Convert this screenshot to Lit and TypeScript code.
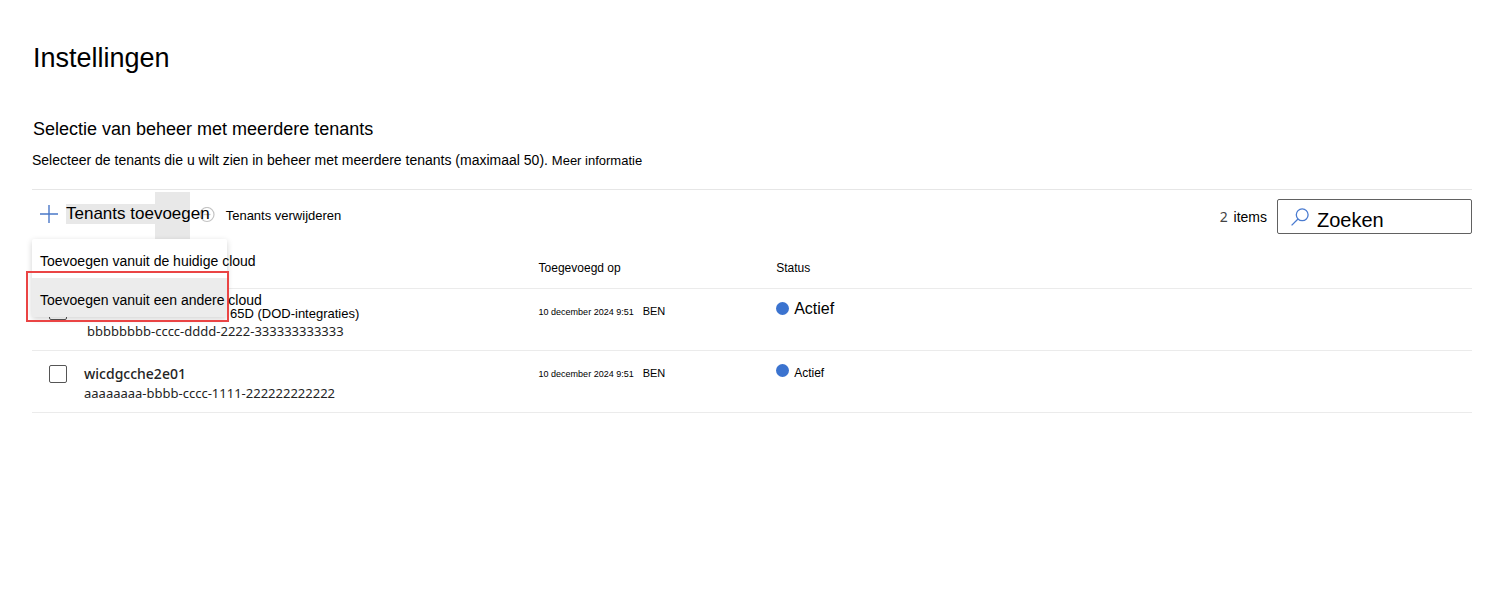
import { LitElement, html, css } from "lit";
import { customElement, property } from "lit/decorators.js";
import { classMap } from "lit/directives/class-map.js";

interface Tenant {
  name: string;
  id: string;
  added: string;
  by: string;
  status: string;
  underMenu: boolean;
}

const tenants: Tenant[] = [
  {
    name: "65D (DOD-integraties)",
    id: "bbbbbbbb-cccc-dddd-2222-333333333333",
    added: "10 december 2024 9:51",
    by: "BEN",
    status: "Actief",
    underMenu: true,
  },
  {
    name: "wicdgcche2e01",
    id: "aaaaaaaa-bbbb-cccc-1111-222222222222",
    added: "10 december 2024 9:51",
    by: "BEN",
    status: "Actief",
    underMenu: false,
  },
];

@customElement("tenant-toolbar")
class TenantToolbar extends LitElement {
  @property({ type: Number }) count = 0;

  static styles = css`
    :host {
      display: flex;
      justify-content: space-between;
      align-items: flex-start;
      height: 50px;
      border-top: 1px solid #e6e6e6;
    }
    button {
      border: 0;
      background: none;
      padding: 0;
      margin: 0;
      font: inherit;
      color: inherit;
      text-align: left;
      white-space: nowrap;
    }
    .commands {
      display: flex;
      position: relative;
      z-index: 1;
    }
    .add {
      display: flex;
      align-items: center;
      gap: 8px;
      height: 50px;
      padding: 0 0 2px 8px;
      position: relative;
      z-index: 1;
      font-size: 17px;
      line-height: 20px;
      background: linear-gradient(#e8e8e8, #e8e8e8) 123px 2px / 35px 47px no-repeat;
    }
    .add-label {
      background: linear-gradient(#e8e8e8, #e8e8e8) 0 0 / 89px 20px no-repeat;
    }
    .remove {
      display: flex;
      align-items: center;
      gap: 11px;
      height: 50px;
      margin-left: -11px;
      font-size: 13px;
      line-height: 20px;
    }
    .remove-label {
      padding-top: 2px;
    }
    .menu {
      position: absolute;
      top: 49px;
      left: 0;
      width: 195px;
      z-index: 2;
      background: #fff;
      border-radius: 2px;
      box-shadow: 0 2px 6px rgba(0, 0, 0, 0.18);
    }
    .item {
      display: block;
      position: relative;
      isolation: isolate;
      width: 100%;
      padding: 6px 0 0 8px;
      font-size: 14px;
      line-height: 33px;
    }
    .item.active {
      background: #ececec;
    }
    .item.active::before {
      content: "";
      position: absolute;
      z-index: -1;
      inset: -7px -2px -5px -6px;
      border: 2px solid #ea4444;
    }
    .right {
      display: flex;
      align-items: center;
      gap: 10px;
      padding-top: 9px;
    }
    .count {
      font-size: 14px;
      line-height: 20px;
    }
    .number {
      font-family: "Noto Sans", sans-serif;
      color: #444;
      margin-right: 2px;
    }
    .search {
      display: flex;
      align-items: center;
      gap: 8px;
      box-sizing: border-box;
      width: 195px;
      height: 35px;
      padding-left: 13px;
      border: 1px solid #616161;
      border-radius: 2px;
    }
    .search input {
      flex: 1;
      min-width: 0;
      height: 33px;
      box-sizing: border-box;
      border: 0;
      outline: 0;
      padding: 7px 0 0;
      background: none;
      font: 20px "Liberation Sans", Arial, sans-serif;
      color: #000;
    }
    .search input::placeholder {
      color: #000;
      opacity: 1;
    }
  `;

  render() {
    return html`
      <div class="commands">
        <button class="add" aria-haspopup="menu" aria-expanded="true">
          <svg width="18" height="18" viewBox="0 0 18 18" fill="none" stroke="#4a78c8" stroke-width="1.4">
            <path d="M9 0v18M0 9h18" />
          </svg>
          <span class="add-label">Tenants toevoegen</span>
        </button>
        <button class="remove">
          <svg width="16" height="16" viewBox="0 0 16 16" fill="none" stroke="#c4c4c4" stroke-width="1.2">
            <circle cx="8" cy="7.5" r="7" />
            <path d="M4.5 7.5h7" />
          </svg>
          <span class="remove-label">Tenants verwijderen</span>
        </button>
        <div class="menu" role="menu">
          <button class="item" role="menuitem">Toevoegen vanuit de huidige cloud</button>
          <button class="item active" role="menuitem">Toevoegen vanuit een andere cloud</button>
        </div>
      </div>
      <div class="right">
        <span class="count"><span class="number">${this.count}</span> items</span>
        <label class="search">
          <svg width="18" height="18" viewBox="0 0 18 18" fill="none" stroke="#4a7bd0" stroke-width="1.3">
            <circle cx="11.2" cy="6.8" r="5.9" />
            <path d="M7 11L.6 17.4" />
          </svg>
          <input type="search" placeholder="Zoeken" aria-label="Zoeken" />
        </label>
      </div>
    `;
  }
}

@customElement("tenant-table")
class TenantTable extends LitElement {
  @property({ attribute: false }) rows: Tenant[] = [];

  static styles = css`
    :host {
      display: block;
    }
    table {
      width: 100%;
      table-layout: fixed;
      border-spacing: 0;
    }
    .col-check {
      width: 52px;
    }
    .col-name {
      width: 31.5%;
    }
    .col-added {
      width: 16.5%;
    }
    th,
    td {
      padding: 0;
      text-align: left;
      vertical-align: top;
      border-bottom: 1px solid #ebebeb;
      white-space: nowrap;
    }
    th {
      height: 30px;
      padding: 18px 0 0 1px;
      font-size: 12px;
      line-height: 20px;
      font-weight: 400;
    }
    td {
      height: 61px;
    }
    .check {
      appearance: none;
      display: block;
      box-sizing: border-box;
      width: 18px;
      height: 18px;
      margin: 14px 0 0 17px;
      border: 1px solid #555;
      border-radius: 2px;
      background: #fff;
    }
    .tenant {
      padding-top: 13px;
      font-family: "Noto Sans", sans-serif;
      color: #242424;
    }
    .name {
      font-size: 14px;
      line-height: 20px;
      font-weight: 500;
    }
    .id {
      font-size: 13px;
      line-height: 18px;
    }
    .under .check {
      margin-top: 13px;
    }
    .under .tenant {
      padding: 17px 0 0 3px;
    }
    .under .name {
      padding-left: 143px;
      font: 13px/16px "Liberation Sans", Arial, sans-serif;
      color: #000;
    }
    .added {
      display: flex;
      align-items: baseline;
      gap: 9px;
      padding: 13px 0 0 1px;
      line-height: 18px;
      font-size: 9px;
    }
    .by {
      font-size: 11px;
    }
    .status {
      display: flex;
      align-items: flex-start;
      gap: 5px;
      padding: 10px 0 0 1px;
      font-size: 12px;
      line-height: 20px;
    }
    .label {
      padding-top: 2px;
    }
    .under .status {
      font-size: 16px;
    }
    .under .label {
      padding-top: 0;
    }
    .dot {
      width: 13px;
      height: 13px;
      margin-top: 3px;
      border-radius: 50%;
      background: #3b73cf;
    }
  `;

  render() {
    return html`
      <table>
        <colgroup>
          <col class="col-check" />
          <col class="col-name" />
          <col class="col-added" />
          <col />
        </colgroup>
        <thead>
          <tr>
            <th></th>
            <th></th>
            <th scope="col">Toegevoegd op</th>
            <th scope="col">Status</th>
          </tr>
        </thead>
        <tbody>
          ${this.rows.map(
            (t) => html`
              <tr class=${classMap({ under: t.underMenu })}>
                <td><input class="check" type="checkbox" aria-label=${t.name} /></td>
                <td>
                  <div class="tenant">
                    <div class="name">${t.name}</div>
                    <div class="id">${t.id}</div>
                  </div>
                </td>
                <td>
                  <div class="added"><span>${t.added}</span><span class="by">${t.by}</span></div>
                </td>
                <td>
                  <div class="status"><span class="dot"></span><span class="label">${t.status}</span></div>
                </td>
              </tr>
            `
          )}
        </tbody>
      </table>
    `;
  }
}

@customElement("app-root")
class AppRoot extends LitElement {
  static styles = css`
    :host {
      display: block;
      padding: 42px 28px 0 32px;
      background: #fff;
      color: #000;
      font-family: "Liberation Sans", Arial, sans-serif;
    }
    h1,
    h2,
    p {
      margin: 0;
      font-weight: 400;
    }
    h1,
    h2 {
      padding-left: 1px;
    }
    h1 {
      font-size: 27px;
      line-height: 32px;
    }
    h2 {
      margin-top: 43px;
      font-size: 18px;
      line-height: 24px;
    }
    p {
      margin: 9px 0 18px;
      font-size: 14px;
      line-height: 20px;
    }
    a {
      color: inherit;
      font-size: 13px;
      text-decoration: none;
    }
  `;

  render() {
    return html`
      <main>
        <h1>Instellingen</h1>
        <h2>Selectie van beheer met meerdere tenants</h2>
        <p>
          Selecteer de tenants die u wilt zien in beheer met meerdere tenants (maximaal 50).
          <a href="#">Meer informatie</a>
        </p>
        <tenant-toolbar .count=${tenants.length}></tenant-toolbar>
        <tenant-table .rows=${tenants}></tenant-table>
      </main>
    `;
  }
}
